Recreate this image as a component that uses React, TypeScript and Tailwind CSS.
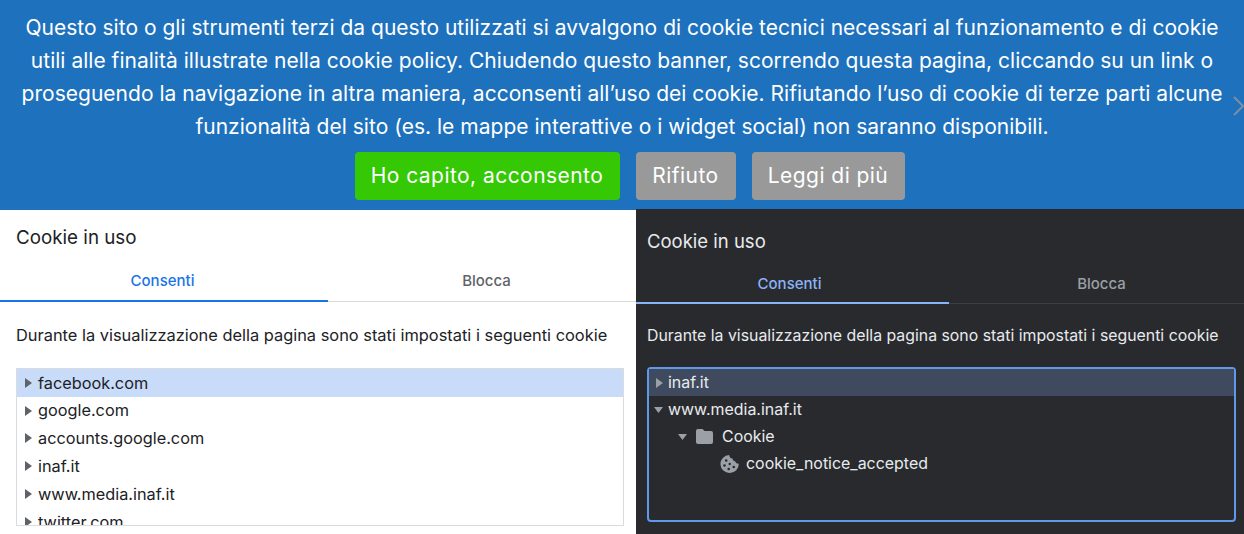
import { ReactNode } from "react";

const lightRows = ["facebook.com", "google.com", "accounts.google.com", "inaf.it", "www.media.inaf.it", "twitter.com"];

function CaretRight({ className }: { className: string }) {
  return (
    <svg viewBox="0 0 7 10" className={`h-[10px] w-[7px] shrink-0 fill-current ${className}`}>
      <path d="M0 0v10L7 5z" />
    </svg>
  );
}

function CaretDown({ className }: { className: string }) {
  return (
    <svg viewBox="0 0 9 6" className={`h-[6px] w-[9px] shrink-0 fill-current ${className}`}>
      <path d="M0 0h9L4.5 6z" />
    </svg>
  );
}

function FolderIcon() {
  return (
    <svg viewBox="0 0 17 15" className="h-[15px] w-[17px] shrink-0 fill-[#9aa0a6]">
      <path d="M2 0h4.5l2 2H15a2 2 0 0 1 2 2v9a2 2 0 0 1-2 2H2a2 2 0 0 1-2-2V2a2 2 0 0 1 2-2z" />
    </svg>
  );
}

function CookieIcon() {
  return (
    <svg viewBox="0 0 19 18" className="h-[18px] w-[19px] shrink-0">
      <path
        d="M9.2 0a4 4 0 0 0 3.2 3.6 3.6 3.6 0 0 0 2.8 3 3.6 3.6 0 0 0 3.6 2.2A9.2 9 0 1 1 9.2 0z"
        fill="#9aa0a6"
      />
      <circle cx="6.2" cy="5.5" r="1.3" fill="#292a2d" />
      <circle cx="4.5" cy="10.5" r="1.3" fill="#292a2d" />
      <circle cx="9.7" cy="9" r="1.2" fill="#292a2d" />
      <circle cx="8.7" cy="14" r="1.3" fill="#292a2d" />
      <circle cx="13.8" cy="12" r="1.3" fill="#292a2d" />
    </svg>
  );
}

function BannerButton({ children, className }: { children: ReactNode; className: string }) {
  return (
    <button className={`h-[48px] rounded-[4px] text-white text-[21px] tracking-[0.45px] ${className}`}>
      {children}
    </button>
  );
}

function Banner() {
  return (
    <div className="relative h-[210px] shrink-0 bg-[#1e71bd] pt-[11px] text-white">
      <p className="text-center text-[21px] leading-[33px] tracking-[0.02px]">
        Questo sito o gli strumenti terzi da questo utilizzati si avvalgono di cookie tecnici necessari al funzionamento e di cookie
        <br />
        utili alle finalità illustrate nella cookie policy. Chiudendo questo banner, scorrendo questa pagina, cliccando su un link o
        <br />
        proseguendo la navigazione in altra maniera, acconsenti all’uso dei cookie. Rifiutando l’uso di cookie di terze parti alcune
        <br />
        funzionalità del sito (es. le mappe interattive o i widget social) non saranno disponibili.
      </p>
      <div className="mt-[9px] flex justify-center gap-4 pl-[15px]">
        <BannerButton className="w-[265px] bg-[#35c804]">Ho capito, acconsento</BannerButton>
        <BannerButton className="w-[100px] bg-[#999999]">Rifiuto</BannerButton>
        <BannerButton className="w-[153px] bg-[#999999]">Leggi di più</BannerButton>
      </div>
      {/* freccia tagliata dal bordo destro */}
      <svg viewBox="0 0 11 20" className="absolute right-0 top-[96px] h-[20px] w-[11px] fill-none stroke-[#7d8ea3] stroke-2">
        <path d="M1 1l9 9-9 9" />
      </svg>
    </div>
  );
}

function LightPanel() {
  return (
    <div className="w-[636px] shrink-0 bg-white text-[#202124]">
      <h2 className="pl-4 pt-[15px] text-[18.8px] leading-[26px] font-normal">Cookie in uso</h2>
      <div className="mt-[14px] flex h-[37px] border-b border-[#dadce0]">
        <div className="w-[328px] -mb-px border-b-2 border-[#1a73e8] pt-[6px] pr-[3px] text-center text-[15px] leading-5 font-medium text-[#1a73e8]">
          Consenti
        </div>
        <div className="flex-1 pt-[6px] pl-[9px] text-center text-[15px] leading-5 font-medium text-[#5f6368]">Blocca</div>
      </div>
      <p className="pl-4 pt-[21px] text-[16.4px] leading-6">
        Durante la visualizzazione della pagina sono stati impostati i seguenti cookie
      </p>
      <div className="ml-4 mt-[21px] h-[158px] w-[608px] overflow-hidden border border-[#d9dbde]">
        {lightRows.map((row, i) => (
          <div
            key={row}
            className={`flex h-[27.8px] items-center pl-[8px] text-[16.3px] ${i === 0 ? "bg-[#c8dbf8]" : ""}`}
          >
            <CaretRight className="text-[#5f6368]" />
            <span className="ml-[6px]">{row}</span>
          </div>
        ))}
      </div>
    </div>
  );
}

function DarkPanel() {
  return (
    <div className="relative z-10 -mt-px flex-1 bg-[#292a2d] text-[#e8eaed]">
      <h2 className="pl-[11px] pt-[19px] text-[18.5px] leading-[26px] font-normal">Cookie in uso</h2>
      <div className="mt-[13px] flex h-[37px] border-b border-[#3c4043]">
        <div className="w-[313px] -mb-px border-b-2 border-[#8ab4f8] pt-[7px] pr-[6px] text-center text-[15px] leading-5 font-medium text-[#8ab4f8]">
          Consenti
        </div>
        <div className="flex-1 pt-[7px] pl-[10px] text-center text-[15px] leading-5 font-medium text-[#9aa0a6]">Blocca</div>
      </div>
      <p className="pl-[11px] pt-[20px] text-[15.85px] leading-6">
        Durante la visualizzazione della pagina sono stati impostati i seguenti cookie
      </p>
      <div className="ml-[11px] mt-[19px] h-[155px] w-[589px] rounded-[4px] border-2 border-[#5f99ea] text-[15.95px]">
        <div className="flex h-[27px] items-center bg-[#3f4a5f] pl-[7px]">
          <CaretRight className="text-[#9aa0a6]" />
          <span className="ml-[5px]">inaf.it</span>
        </div>
        <div className="flex h-[27px] items-center pl-[5px]">
          <CaretDown className="text-[#9aa0a6]" />
          <span className="ml-[5px]">www.media.inaf.it</span>
        </div>
        <div className="flex h-[27px] items-center pl-[29px]">
          <CaretDown className="text-[#9aa0a6]" />
          <span className="ml-[9px]"><FolderIcon /></span>
          <span className="ml-[9px]">Cookie</span>
        </div>
        <div className="flex h-[27px] items-center pl-[71px]">
          <CookieIcon />
          <span className="ml-[7px]">cookie_notice_accepted</span>
        </div>
      </div>
    </div>
  );
}

export default function App() {
  return (
    <div className="flex h-[534px] w-[1244px] flex-col overflow-hidden bg-white font-['Inter','Liberation_Sans',sans-serif]">
      <Banner />
      <div className="flex flex-1">
        <LightPanel />
        <DarkPanel />
      </div>
    </div>
  );
}
